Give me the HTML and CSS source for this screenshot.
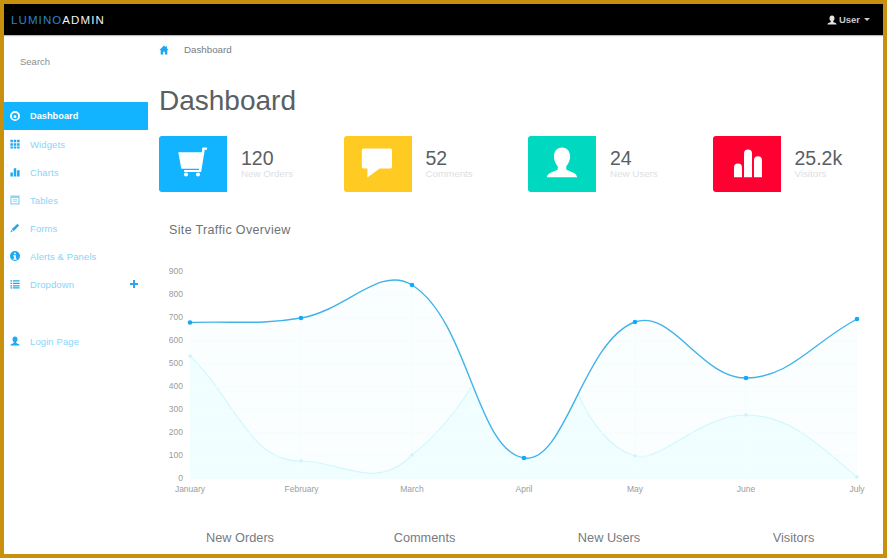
FILE: index.html
```html
<!DOCTYPE html>
<html lang="en">
<head>
    <meta charset="UTF-8">
    <title>Lumino Admin - Dashboard</title>
    <link rel="stylesheet" href="styles.css">
</head>
<body>
<div class="frame">
    <header class="topbar">
        <div class="brand"><span class="brand_blue">LUMINO</span>ADMIN</div>
        <div class="user">
            <svg class="user_icon" viewBox="0 0 24 24"><path d="M12 1c-4 0-6 3-6 6.500 0 3 1.300 5.500 3 7v2c-2 1.500-8 2-8 6h22c0-4-6-4.500-8-6v-2c1.700-1.500 3-4 3-7C18 4 16 1 12 1z"></path></svg>
            <span>User</span>
            <span class="caret"></span>
        </div>
    </header>
    <div class="content">
        <aside class="sidebar">
            <div class="search">Search</div>
            <nav class="nav">
                <a class="navitem active">
                    <svg class="icon" viewBox="0 0 24 24"><path fill-rule="evenodd" d="M12 0a12 12 0 1 0 0 24a12 12 0 0 0 0-24zM12 5a7.500 7.500 0 1 1 0 15a7.500 7.500 0 0 1 0-15z"></path><circle cx="12" cy="13.500" r="3.500"></circle></svg>
                    Dashboard
                </a>
                <a class="navitem">
                    <svg class="icon" viewBox="0 0 24 24"><path d="M1 2h6v6H1zM9 2h6v6H9zM17 2h6v6h-6zM1 10h6v6H1zM9 10h6v6H9zM17 10h6v6h-6zM1 18h6v5H1zM9 18h6v5H9zM17 18h6v5h-6z"></path></svg>
                    Widgets
                </a>
                <a class="navitem">
                    <svg class="icon" viewBox="0 0 24 24"><path d="M1 13h6v10H1zM9 3h6v20H9zM17 8h6v15h-6z"></path></svg>
                    Charts
                </a>
                <a class="navitem">
                    <svg class="icon icon_pale" viewBox="0 0 24 24"><path fill-rule="evenodd" d="M1 1h22v22H1zM4 7v13h16V7zM7 10h10v2H7zM7 14h10v2H7z"></path></svg>
                    Tables
                </a>
                <a class="navitem">
                    <svg class="icon" viewBox="0 0 24 24"><path d="M18 2l4 4L9 19l-5-4zM3 17l4 3-6 3z"></path></svg>
                    Forms
                </a>
                <a class="navitem">
                    <svg class="icon" viewBox="0 0 24 24"><path fill-rule="evenodd" d="M12 0a12 12 0 1 0 0 24a12 12 0 0 0 0-24zM10 4h4v4h-4zM8 10h6v8h2v3H8v-3h2v-5H8z"></path></svg>
                    Alerts &amp; Panels
                </a>
                <a class="navitem">
                    <svg class="icon" viewBox="0 0 24 24"><path d="M1 3h4v3H1zM7 3h16v3H7zM1 9h4v3H1zM7 9h16v3H7zM1 15h4v3H1zM7 15h16v3H7zM1 20h4v3H1zM7 20h16v3H7z"></path></svg>
                    Dropdown
                    <svg class="plus" viewBox="0 0 10 10"><path d="M4 1h2v3h3v2H6v3H4V6H1V4h3z"></path></svg>
                </a>
                <a class="navitem login">
                    <svg class="icon" viewBox="0 0 24 24"><path d="M12 1c-4 0-6 3-6 6.500 0 3 1.300 5.500 3 7v2c-2 1.500-8 2-8 6h22c0-4-6-4.500-8-6v-2c1.700-1.500 3-4 3-7C18 4 16 1 12 1z"></path></svg>
                    Login Page
                </a>
            </nav>
        </aside>
        <main class="main">
            <div class="crumbs">
                <svg class="home" viewBox="0 0 24 24"><path d="M12 1L1 12h3v11h6v-7h4v7h6V12h3l-4-4V3h-3v2z"></path></svg>
                <span>Dashboard</span>
            </div>
            <h1 class="title">Dashboard</h1>
            <section class="stats">
                <div class="stat">
                    <div class="stat_box blue">
                        <svg class="stat_icon" viewBox="0 0 40 40"><path d="M31 .5H36.500V3.200H33.800L29.600 29.500H9.500V27H27L27.400 25.500H6.200L2.700 6.200H30.400z"></path><circle cx="11.800" cy="32.300" r="2.400"></circle><circle cx="25.900" cy="32.300" r="2.400"></circle></svg>
                    </div>
                    <div class="stat_text">
                        <div class="stat_num">120</div>
                        <div class="stat_label">New Orders</div>
                    </div>
                </div>
                <div class="stat">
                    <div class="stat_box yellow">
                        <svg class="stat_icon" viewBox="0 0 40 40"><path d="M3 1.800h31.500a2 2 0 0 1 2 2V23.300a2 2 0 0 1-2 2H22L7.500 36V25.300H3a2 2 0 0 1-2-2V3.800a2 2 0 0 1 2-2z"></path></svg>
                    </div>
                    <div class="stat_text">
                        <div class="stat_num">52</div>
                        <div class="stat_label">Comments</div>
                    </div>
                </div>
                <div class="stat">
                    <div class="stat_box teal">
                        <svg class="stat_icon" viewBox="0 0 40 40"><path d="M20 .5c-6 0-9.500 4.500-9.500 11 0 4.500 2 8.500 4.500 11v4c-3 2.500-11.500 3-13 9h36c-1.500-6-10-6.500-13-9v-4c2.500-2.500 4.500-6.500 4.500-11 0-6.500-3.500-11-9.500-11z"></path></svg>
                    </div>
                    <div class="stat_text">
                        <div class="stat_num">24</div>
                        <div class="stat_label">New Users</div>
                    </div>
                </div>
                <div class="stat">
                    <div class="stat_box red">
                        <svg class="stat_icon" viewBox="0 0 40 40"><path d="M4.700 24a4.700 4.700 0 0 1 9.400 0V35.500H4.700zM16.500 7.700a4.700 4.700 0 0 1 9.400 0V35.500H16.500zM28.200 15.700a4.700 4.700 0 0 1 9.400 0V35.500H28.200z"></path></svg>
                    </div>
                    <div class="stat_text">
                        <div class="stat_num">25.2k</div>
                        <div class="stat_label">Visitors</div>
                    </div>
                </div>
            </section>
            <h2 class="chart_title">Site Traffic Overview</h2>
            <svg class="chart" viewBox="159 260 724 240">
                <defs>
                    <clipPath id="under_blue">
                        <path d="M190,321.500 C234.400,319.700 257.500,324.400 301,317 C346.300,309.400 379.900,263.800 412,284 C469,319.800 475.800,449 524,457 C565,463.800 583,339.700 635,321 C671.800,307.700 701.800,377.600 746,377 C790.600,376.400 812.600,341.600 857,318 L857,478 L190,478 Z"></path>
                    </clipPath>
                </defs>
                <path class="area_blue" d="M190,321.500 C234.400,319.700 257.500,324.400 301,317 C346.300,309.400 379.900,263.800 412,284 C469,319.800 475.800,449 524,457 C565,463.800 583,339.700 635,321 C671.800,307.700 701.800,377.600 746,377 C790.600,376.400 812.600,341.600 857,318 L857,478 L190,478 Z"></path>
                <g clip-path="url(#under_blue)">
                    <path class="area_light" d="M190,355 C234.400,397 249.600,461.400 301,460 C338.400,459 375,492 412,454 C435,436 455,412 472,385 L524,300 L578,393 C590,420 610,448 635,455 C660,462 700,414 746,414 C790,414 820,445 857,476 L857,478 L190,478 Z"></path>
                    <path class="line_light" d="M190,355 C234.400,397 249.600,461.400 301,460 C338.400,459 375,492 412,454 C435,436 455,412 472,385 M578,393 C590,420 610,448 635,455 C660,462 700,414 746,414 C790,414 820,445 857,476"></path>
                </g>
                <g class="grid" clip-path="url(#under_blue)">
                    <path d="M190 455H857M190 432H857M190 409H857M190 386H857M190 363H857M190 340H857M190 317H857M190 294H857"></path>
                    <path d="M301 271V478M412 271V478M524 271V478M635 271V478M746 271V478M857 271V478"></path>
                </g>
                <g class="dots_light">
                    <circle cx="190" cy="355" r="1.800"></circle>
                    <circle cx="301" cy="460" r="1.800"></circle>
                    <circle cx="412" cy="454" r="1.800"></circle>
                    <circle cx="635" cy="455" r="1.800"></circle>
                    <circle cx="746" cy="414" r="1.800"></circle>
                    <circle cx="857" cy="476" r="1.800"></circle>
                </g>
                <path class="line_blue" d="M190,321.500 C234.400,319.700 257.500,324.400 301,317 C346.300,309.400 379.900,263.800 412,284 C469,319.800 475.800,449 524,457 C565,463.800 583,339.700 635,321 C671.800,307.700 701.800,377.600 746,377 C790.600,376.400 812.600,341.600 857,318"></path>
                <g class="dots_blue">
                    <circle cx="190" cy="321.500" r="2.300"></circle>
                    <circle cx="301" cy="317" r="2.300"></circle>
                    <circle cx="412" cy="284" r="2.300"></circle>
                    <circle cx="524" cy="457" r="2.300"></circle>
                    <circle cx="635" cy="321" r="2.300"></circle>
                    <circle cx="746" cy="377" r="2.300"></circle>
                    <circle cx="857" cy="318" r="2.300"></circle>
                </g>
                <g class="yaxis">
                    <text x="183" y="273">900</text>
                    <text x="183" y="296">800</text>
                    <text x="183" y="319">700</text>
                    <text x="183" y="342">600</text>
                    <text x="183" y="365">500</text>
                    <text x="183" y="388">400</text>
                    <text x="183" y="411">300</text>
                    <text x="183" y="434">200</text>
                    <text x="183" y="457">100</text>
                    <text x="183" y="480">0</text>
                </g>
                <g class="xaxis">
                    <text x="190" y="491">January</text>
                    <text x="301.500" y="491">February</text>
                    <text x="412" y="491">March</text>
                    <text x="524" y="491">April</text>
                    <text x="635" y="491">May</text>
                    <text x="746" y="491">June</text>
                    <text x="857" y="491">July</text>
                </g>
            </svg>
            <div class="footer_labels">
                <div>New Orders</div>
                <div>Comments</div>
                <div>New Users</div>
                <div>Visitors</div>
            </div>
        </main>
    </div>
</div>
</body>
</html>
```

FILE: styles.css
```css
body{
    margin: 0;
    font-family: "Liberation Sans", Arial, sans-serif;
    background-color: #fff;
}
.frame{
    box-sizing: border-box;
    width: 887px;
    height: 558px;
    border: 4px solid #c8900c;
    overflow: hidden;
    display: flex;
    flex-direction: column;
}
.topbar{
    flex: none;
    height: 31px;
    background-color: #000;
    display: flex;
    align-items: center;
    justify-content: space-between;
    padding: 0 13px 0 7px;
    box-shadow: 0 1px 1px #bbb;
}
.brand{
    font-size: 11.5px;
    letter-spacing: 1.1px;
    color: #f2f2f2;
}
.brand_blue{
    color: #2c82cf;
}
.user{
    display: flex;
    align-items: center;
    color: #c9c9c9;
    font-size: 9.5px;
    font-weight: bold;
}
.user_icon{
    width: 10px;
    height: 10px;
    fill: #e4e4e4;
    margin-right: 2px;
}
.caret{
    margin-left: 4px;
    border-top: 3px solid #ccc;
    border-left: 3px solid transparent;
    border-right: 3px solid transparent;
}
.content{
    flex: 1;
    display: flex;
    min-height: 0;
}
.sidebar{
    flex: none;
    width: 144px;
}
.search{
    padding: 21px 0 0 16px;
    height: 46px;
    font-size: 9.5px;
    line-height: 11px;
    color: #8d8d8d;
}
.nav{
    display: flex;
    flex-direction: column;
}
.navitem{
    height: 28px;
    display: flex;
    align-items: center;
    padding-left: 6px;
    font-size: 9.5px;
    letter-spacing: .1px;
    color: #86d6fb;
}
.navitem.active{
    background-color: #12b4ff;
    color: #fff;
    font-weight: bold;
    font-size: 9.25px;
    letter-spacing: 0;
}
.navitem.login{
    margin-top: 29px;
}
.icon{
    flex: none;
    width: 10px;
    height: 10px;
    fill: #1fa9f2;
    margin-right: 10px;
}
.active .icon{
    fill: #fff;
}
.icon_pale{
    fill: #86d6f8;
}
.plus{
    width: 10px;
    height: 10px;
    fill: #2aa5ee;
    margin-left: auto;
    margin-right: 9px;
}
.main{
    flex: 1;
    min-width: 0;
    padding-left: 11px;
}
.crumbs{
    height: 29px;
    display: flex;
    align-items: center;
    font-size: 9.75px;
    color: #787c80;
}
.home{
    width: 10px;
    height: 10px;
    fill: #1ea6f0;
    margin: 0 15px 0 0;
}
.title{
    margin: 20px 0 18px;
    font-size: 28px;
    line-height: 34px;
    font-weight: normal;
    color: #5a5f63;
}
.stats{
    display: grid;
    grid-template-columns: repeat(4, 162px);
    column-gap: 22.5px;
}
.stat{
    display: flex;
    align-items: center;
}
.stat_box{
    flex: none;
    width: 68px;
    height: 56px;
    margin-right: 14px;
    border-radius: 3px 0 0 3px;
    display: flex;
    align-items: center;
    justify-content: center;
}
.blue{
    background-color: #12b4ff;
}
.yellow{
    background-color: #ffcb22;
}
.teal{
    background-color: #00d9c0;
}
.red{
    background-color: #ff0030;
}
.stat_icon{
    width: 34px;
    height: 34px;
    fill: #fff;
}
.stat_text{
    padding-bottom: 3px;
}
.stat_num{
    font-size: 19.5px;
    line-height: 22px;
    color: #5a5f63;
}
.stat_label{
    font-size: 9.75px;
    line-height: 11px;
    color: #dde0e3;
    margin-top: -1px;
}
.chart_title{
    margin: 30px 0 0 10px;
    font-size: 12.5px;
    line-height: 16px;
    font-weight: normal;
    letter-spacing: .35px;
    color: #6e7276;
}
.chart{
    display: block;
    width: 724px;
    height: 240px;
    margin-top: 23px;
}
.area_blue{
    fill: #fbfeff;
}
.area_light{
    fill: #f0feff;
}
.grid path{
    fill: none;
    stroke: #f3fdff;
    stroke-width: 1;
}
.line_light{
    fill: none;
    stroke: #d2f8fb;
    stroke-width: 1.2;
}
.dots_light{
    fill: #cdf4f8;
}
.line_blue{
    fill: none;
    stroke: #40b3ea;
    stroke-width: 1.4;
}
.dots_blue{
    fill: #14a8f6;
}
.yaxis text{
    font-size: 8.5px;
    fill: #999da0;
    text-anchor: end;
}
.xaxis text{
    font-size: 8.5px;
    fill: #999da0;
    text-anchor: middle;
}
.footer_labels{
    display: grid;
    grid-template-columns: repeat(4, 162px);
    column-gap: 22.5px;
    margin-top: 29px;
    font-size: 12.75px;
    line-height: 16px;
    text-align: center;
    color: #777b7f;
}
```
